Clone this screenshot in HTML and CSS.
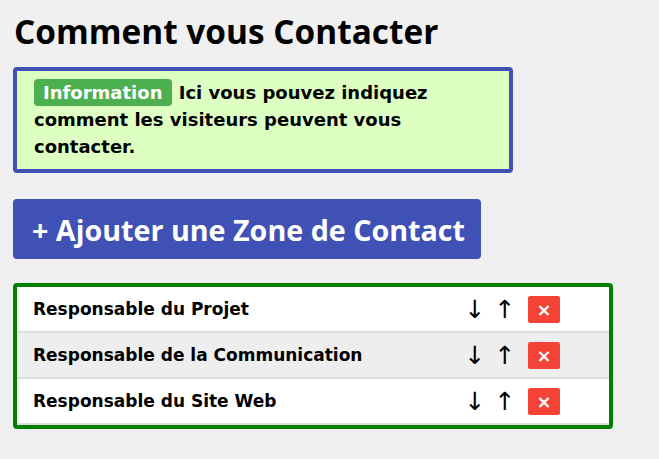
FILE: index.html
```html
<!DOCTYPE html>
<html lang="fr">
<head>
<meta charset="utf-8">
<title>Comment vous Contacter</title>
<link rel="stylesheet" href="styles.css">
</head>
<body>
<main class="page">
  <h1 class="title">Comment vous Contacter</h1>
  <div class="info">
    <span class="badge">Information</span> Ici vous pouvez indiquez comment les visiteurs peuvent vous contacter.
  </div>
  <button class="add-btn">+ Ajouter une Zone de Contact</button>
  <ul class="list">
    <li class="row">
      <span class="name">Responsable du Projet</span>
      <span class="actions"><span class="arrow">↓</span><span class="arrow">↑</span><span class="del">×</span></span>
    </li>
    <li class="row alt">
      <span class="name">Responsable de la Communication</span>
      <span class="actions"><span class="arrow">↓</span><span class="arrow">↑</span><span class="del">×</span></span>
    </li>
    <li class="row">
      <span class="name">Responsable du Site Web</span>
      <span class="actions"><span class="arrow">↓</span><span class="arrow">↑</span><span class="del">×</span></span>
    </li>
  </ul>
</main>
</body>
</html>
```
FILE: styles.css
```css
html, body {
  margin: 0;
  padding: 0;
  background: #f0f0f0;
}
.page {
  padding: 0 13px;
  display: flex;
  flex-direction: column;
  align-items: flex-start;
}
.title {
  font-family: "Open Sans", "Noto Sans", sans-serif;
  font-weight: 700;
  font-size: 33.4px;
  line-height: 40px;
  margin: 11px 0 16px 1px;
  color: #000;
}
.info {
  box-sizing: border-box;
  width: 500px;
  border: 4px solid #3f51b5;
  border-radius: 4px;
  background: #ddffc1;
  padding: 8px 14px 9px 17px;
  font-family: "DejaVu Sans", Verdana, sans-serif;
  font-weight: 700;
  font-size: 18px;
  line-height: 27px;
  color: #000;
}
.badge {
  display: inline-block;
  background: #4caf50;
  color: #fff;
  border-radius: 4px;
  padding: 3px 10px 3px 9px;
  line-height: 21px;
}
.add-btn {
  margin-top: 26px;
  height: 60px;
  width: 468px;
  border: none;
  border-radius: 4px;
  background: #3f51b5;
  color: #fff;
  font-family: "Open Sans", "Noto Sans", sans-serif;
  font-weight: 700;
  font-size: 28.7px;
  padding: 0 0 0 19px;
  text-align: left;
}
.list {
  list-style: none;
  box-sizing: border-box;
  width: 600px;
  margin: 24px 0 0 0;
  padding: 0;
  border: 4px solid #008000;
  border-radius: 4px;
  background: #fff;
}
.row {
  display: flex;
  align-items: center;
  justify-content: space-between;
  height: 44px;
  border-bottom: 2px solid #dddddd;
  padding: 0 49px 0 16px;
  background: #fff;
}
.row.alt {
  background: #eeeeee;
}
.name {
  font-family: "DejaVu Sans", Verdana, sans-serif;
  font-weight: 700;
  font-size: 17px;
  color: #000;
}
.actions {
  display: flex;
  align-items: center;
}
.arrow {
  font-family: "DejaVu Sans", sans-serif;
  font-size: 25px;
  width: 30px;
  text-align: center;
  color: #000;
}
.del {
  width: 32px;
  height: 27px;
  margin-left: 8px;
  border-radius: 2px;
  background: #f44336;
  color: #fff;
  font-family: "DejaVu Sans", sans-serif;
  font-weight: 700;
  font-size: 18px;
  display: flex;
  align-items: center;
  justify-content: center;
}
```
